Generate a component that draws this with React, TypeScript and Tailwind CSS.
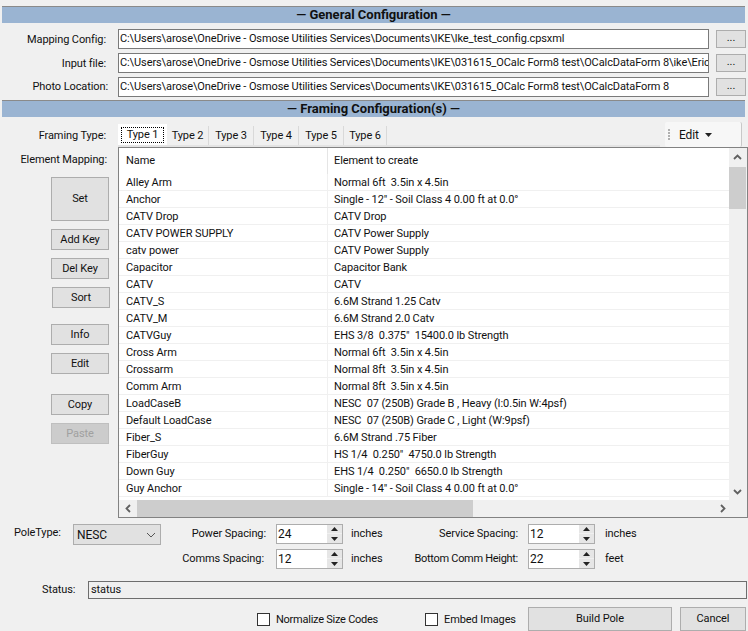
import React from "react";

const font = "[font-family:'Roboto','Liberation_Sans',sans-serif]";

const rows: [string, string][] = [
  ["Alley Arm", "Normal 6ft  3.5in x 4.5in"],
  ["Anchor", 'Single - 12" - Soil Class 4 0.00 ft at 0.0°'],
  ["CATV Drop", "CATV Drop"],
  ["CATV POWER SUPPLY", "CATV Power Supply"],
  ["catv power", "CATV Power Supply"],
  ["Capacitor", "Capacitor Bank"],
  ["CATV", "CATV"],
  ["CATV_S", "6.6M Strand 1.25 Catv"],
  ["CATV_M", "6.6M Strand 2.0 Catv"],
  ["CATVGuy", 'EHS 3/8  0.375"  15400.0 lb Strength'],
  ["Cross Arm", "Normal 6ft  3.5in x 4.5in"],
  ["Crossarm", "Normal 8ft  3.5in x 4.5in"],
  ["Comm Arm", "Normal 8ft  3.5in x 4.5in"],
  ["LoadCaseB", "NESC  07 (250B) Grade B , Heavy (I:0.5in W:4psf)"],
  ["Default LoadCase", "NESC  07 (250B) Grade C , Light (W:9psf)"],
  ["Fiber_S", "6.6M Strand .75 Fiber"],
  ["FiberGuy", 'HS 1/4  0.250"  4750.0 lb Strength'],
  ["Down Guy", 'EHS 1/4  0.250"  6650.0 lb Strength'],
  ["Guy Anchor", 'Single - 14" - Soil Class 4 0.00 ft at 0.0°'],
];

const tabs = [
  ["Type 2", "w-[42px]"],
  ["Type 3", "w-[45px]"],
  ["Type 4", "w-[45px]"],
  ["Type 5", "w-[45px]"],
  ["Type 6", "w-[43px]"],
];

const SectionBar = ({ title, className }: { title: string; className: string }) => (
  <div
    className={`ml-[2px] flex h-[17px] w-[743px] items-center justify-center whitespace-pre border-t border-[#8a8a8a] bg-[#9ab4d2] text-[13px] font-bold tracking-normal text-[#101010] ${className}`}
  >
    {title}
  </div>
);

const PathRow = ({ label, value, labelClass }: { label: string; value: string; labelClass: string }) => (
  <div className="flex h-[20px] items-center">
    <div className={`w-[106px] text-right ${labelClass}`}>{label}</div>
    <div className={`flex h-[20px] w-[591px] items-center overflow-hidden whitespace-pre border border-[#7a7a7a] bg-white pl-[1px] ${label === "Photo Location:" ? "ml-[10px]" : "ml-[12px]"}`}>
      {value}
    </div>
    <button className="ml-[7px] flex h-[18px] w-[30px] shrink-0 items-center justify-center border border-[#adadad] bg-[#e1e1e1] pb-[3px]">
      ...
    </button>
  </div>
);

const SideButton = ({ label, className = "", disabled = false }: { label: string; className?: string; disabled?: boolean }) => (
  <button
    className={`flex w-[58px] items-center justify-center border ${
      disabled ? "border-[#bfbfbf] bg-[#cccccc] text-[#a0a0a0]" : "border-[#adadad] bg-[#e1e1e1]"
    } ${className}`}
  >
    {label}
  </button>
);

const Spinner = ({ value }: { value: string }) => (
  <div className="flex h-[20px] w-[67px] items-center border border-[#adadad] bg-white text-[12px]">
    <div className="w-[50px] pl-[1px]">{value}</div>
    <div className="flex h-[18px] w-[15px] flex-col gap-[1px] bg-[#f0f0f0]">
      <div className="flex h-[8px] items-center justify-center bg-[#e6e6e6]">
        <svg width="7" height="4" viewBox="0 0 7 4"><path d="M3.5 0L7 4H0z" fill="#222" /></svg>
      </div>
      <div className="flex h-[9px] items-center justify-center bg-[#e6e6e6]">
        <svg width="7" height="4" viewBox="0 0 7 4"><path d="M0 0h7L3.5 4z" fill="#222" /></svg>
      </div>
    </div>
  </div>
);

const Chevron = ({ d }: { d: string }) => (
  <svg width="9" height="9" viewBox="0 0 9 9" fill="none" stroke="#606060" strokeWidth="1.8">
    <path d={d} />
  </svg>
);

export default function App() {
  return (
    <div className={`flex h-[631px] w-[748px] flex-col overflow-hidden whitespace-nowrap bg-[#f0f0f0] pt-[6px] text-[11px] leading-[16px] tracking-[-0.1px] text-[#111] ${font}`}>
      <SectionBar title="— General Configuration —" className="" />

      <div className="mt-[6px] flex flex-col gap-[4px]">
        <PathRow labelClass="pt-[2px]" label="Mapping Config:" value="C:\Users\arose\OneDrive - Osmose Utilities Services\Documents\IKE\lke_test_config.cpsxml" />
        <PathRow labelClass="pt-[2px]" label="Input file:" value="C:\Users\arose\OneDrive - Osmose Utilities Services\Documents\IKE\031615_OCalc Form8 test\OCalcDataForm 8\ike\Eric" />
        <PathRow labelClass="pl-0 w-[108px]" label="Photo Location:" value="C:\Users\arose\OneDrive - Osmose Utilities Services\Documents\IKE\031615_OCalc Form8 test\OCalcDataForm 8" />
      </div>

      <SectionBar title="— Framing Configuration(s) —" className="mt-[3px]" />

      {/* tab strip + toolbar */}
      <div className="mt-[4px] flex h-[26px] items-end">
        <div className="mb-[3px] w-[106px] text-right">Framing Type:</div>
        <div className="ml-[12px] flex h-[23px] w-[542px] border-b-2 border-[#e3e3e3]">
          <div className="flex h-[21px] w-[49px] items-center justify-center bg-white">
            <span className="border border-dotted border-black px-[5px] leading-[14px]">Type 1</span>
          </div>
          {tabs.map(([t, w]) => (
            <div key={t} className={`mt-[2px] flex h-[19px] items-center justify-center border-r border-[#d9d9d9] bg-[#f0f0f0] pt-[1px] ${w}`}>
              {t}
            </div>
          ))}
        </div>
        <div className="ml-[5px] flex h-[25px] w-[77px] items-center rounded-[2px] border-r border-[#c8c8c8] bg-[#f7f7f7]">
          <div className="ml-[3px] flex flex-col gap-[1px]">
            {[0, 1, 2, 3].map((i) => (
              <div key={i} className="h-[2px] w-[2px] bg-[#b0b0b0]" />
            ))}
          </div>
          <span className="ml-[9px] text-[12px]">Edit</span>
          <svg className="ml-[6px]" width="7" height="4" viewBox="0 0 7 4"><path d="M0 0h7L3.5 4z" fill="#222" /></svg>
        </div>
      </div>

      <div className="flex">
        {/* left side */}
        <div className="flex w-[118px] flex-col">
          <div className="mt-[5px] pr-[11px] text-right">Element Mapping:</div>
          <div className="ml-[51px] flex flex-col">
            <SideButton label="Set" className="mt-[9px] h-[44px]" />
            <SideButton label="Add Key" className="mt-[8px] h-[21px]" />
            <SideButton label="Del Key" className="mt-[8px] h-[21px]" />
            <SideButton label="Sort" className="ml-[1px] mt-[8px] h-[21px]" />
            <SideButton label="Info" className="mt-[16px] h-[21px]" />
            <SideButton label="Edit" className="mt-[8px] h-[21px]" />
            <SideButton label="Copy" className="mt-[20px] h-[21px]" />
            <SideButton label="Paste" className="mt-[8px] h-[21px]" disabled />
          </div>
        </div>

        {/* grid */}
        <div className="h-[371px] w-[630px] border border-[#828282] bg-[#f0f0f0]">
          <div className="flex h-[352px]">
            <div className="w-[610px] bg-white">
              <div className="flex h-[26px] items-center">
                <div className="h-full w-[209px] border-r border-[#e5e5e5] pl-[7px] pt-[5px]">Name</div>
                <div className="pl-[6px]">Element to create</div>
              </div>
              {rows.map(([name, el]) => (
                <div key={name} className="flex h-[17px] items-center whitespace-pre border-b border-[#f0f0f0]">
                  <div className="h-full w-[209px] border-r border-[#f0f0f0] pl-[7px] pt-[1px]">{name}</div>
                  <div className="h-full pl-[6px] pt-[1px]">{el}</div>
                </div>
              ))}
            </div>
            <div className="flex w-[17px] flex-col items-center">
              <div className="flex h-[19px] items-center justify-center">
                <Chevron d="M1 6l3.5-3.5L8 6" />
              </div>
              <div className="h-[42px] w-full bg-[#cdcdcd]" />
              <div className="mt-auto flex h-[17px] items-center justify-center">
                <Chevron d="M1 3l3.5 3.5L8 3" />
              </div>
            </div>
          </div>
          <div className="flex h-[17px] items-center">
            <div className="flex w-[18px] justify-center"><Chevron d="M6 1L2.5 4.5 6 8" /></div>
            <div className="h-full w-[336px] bg-[#cdcdcd]" />
            <div className="ml-auto mr-[20px] flex"><Chevron d="M3 1l3.5 3.5L3 8" /></div>
          </div>
        </div>
      </div>

      {/* spacing settings */}
      <div className="mt-[6px] flex">
        <div className="ml-[14px] mt-[1px] w-[59px]">PoleType:</div>
        <div className="flex h-[21px] w-[88px] items-center justify-between border border-[#adadad] bg-[#e1e1e1] pl-[3px] pr-[4px] text-[12px]">
          <span>NESC</span>
          <svg width="10" height="6" viewBox="0 0 10 6" fill="none" stroke="#555" strokeWidth="1"><path d="M1 1l4 4 4-4" /></svg>
        </div>
        <div className="ml-[12px] flex flex-col gap-[5px]">
          <div className="flex items-center">
            <div className="w-[93px] text-right">Power Spacing:</div>
            <div className="ml-[10px]"><Spinner value="24" /></div>
            <div className="ml-[8px] w-[54px]">inches</div>
            <div className="w-[113px] text-right">Service Spacing:</div>
            <div className="ml-[10px]"><Spinner value="12" /></div>
            <div className="ml-[10px]">inches</div>
          </div>
          <div className="flex items-center">
            <div className="w-[91px] pr-0 text-right">Comms Spacing:</div>
            <div className="ml-[12px]"><Spinner value="12" /></div>
            <div className="ml-[8px] w-[54px]">inches</div>
            <div className="w-[113px] text-right tracking-[-0.3px]">Bottom Comm Height:</div>
            <div className="ml-[10px]"><Spinner value="22" /></div>
            <div className="ml-[10px]">feet</div>
          </div>
        </div>
      </div>

      {/* status */}
      <div className="mt-[12px] flex items-center">
        <div className="ml-[42px] w-[46px]">Status:</div>
        <div className="flex h-[18px] w-[659px] items-center border border-[#6e6e6e] bg-[#f0f0f0] pl-[2px]">status</div>
      </div>

      {/* footer */}
      <div className="mt-[8px] flex h-[24px] items-center">
        <div className="ml-[257px] h-[13px] w-[13px] border border-[#333] bg-white" />
        <span className="ml-[6px] w-[149px] pt-[1px] tracking-[-0.25px]">Normalize Size Codes</span>
        <div className="h-[13px] w-[13px] border border-[#333] bg-white" />
        <span className="ml-[6px] w-[84px] pt-[1px]">Embed Images</span>
        <button className="h-[24px] w-[144px] border border-[#adadad] bg-[#e1e1e1]">Build Pole</button>
        <button className="ml-[8px] h-[24px] w-[66px] border border-[#adadad] bg-[#e1e1e1]">Cancel</button>
      </div>
    </div>
  );
}
